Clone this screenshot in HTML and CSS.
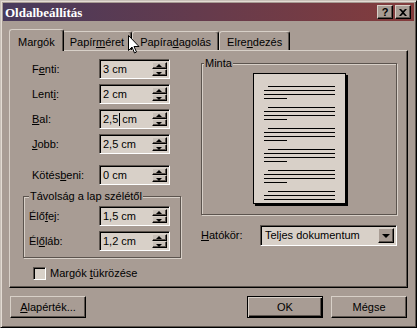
FILE: index.html
```html
<!DOCTYPE html>
<html lang="hu">
<head>
    <meta charset="UTF-8">
    <title>Oldalbeállítás</title>
    <link rel="stylesheet" href="styles.css">
</head>
<body>
<div class="window">
    <!-- Címsor -->
    <div class="titlebar">
        <span class="title">Oldalbeállítás</span>
        <span class="tbtn help">?</span>
        <span class="tbtn">
            <svg width="8" height="7" viewBox="0 0 8 7"><path d="M0 0h2l2 2 2-2h2L5 3.5 8 7H6L4 5 2 7H0l3-3.5z" fill="#000"/></svg>
        </span>
    </div>

    <div class="content">
        <!-- Fülek -->
        <div class="tabs">
            <div class="tab active">Mar<u>g</u>ók</div>
            <div class="tab">Papír<u>m</u>éret</div>
            <div class="tab">Papíra<u>d</u>agolás</div>
            <div class="tab">Elre<u>n</u>dezés</div>
        </div>

        <div class="panel">
            <!-- Margók -->
            <div class="left">
                <div class="field">
                    <label>F<u>e</u>nti:</label>
                    <div class="spin"><span class="val">3 cm</span><span class="arrows"><i class="up"></i><i class="down"></i></span></div>
                </div>
                <div class="field">
                    <label>Lent<u>i</u>:</label>
                    <div class="spin"><span class="val">2 cm</span><span class="arrows"><i class="up"></i><i class="down"></i></span></div>
                </div>
                <div class="field">
                    <label><u>B</u>al:</label>
                    <div class="spin"><span class="val">2,5<span class="caret"></span>cm</span><span class="arrows"><i class="up"></i><i class="down"></i></span></div>
                </div>
                <div class="field">
                    <label><u>J</u>obb:</label>
                    <div class="spin"><span class="val">2,5 cm</span><span class="arrows"><i class="up"></i><i class="down"></i></span></div>
                </div>
                <div class="field gap">
                    <label>Kötés<u>b</u>eni:</label>
                    <div class="spin"><span class="val">0 cm</span><span class="arrows"><i class="up"></i><i class="down"></i></span></div>
                </div>

                <fieldset class="group">
                    <legend>Távolság a lap szélétől</legend>
                    <div class="field">
                        <label>Élő<u>f</u>ej:</label>
                        <div class="spin"><span class="val">1,5 cm</span><span class="arrows"><i class="up"></i><i class="down"></i></span></div>
                    </div>
                    <div class="field">
                        <label>Él<u>ő</u>láb:</label>
                        <div class="spin"><span class="val">1,2 cm</span><span class="arrows"><i class="up"></i><i class="down"></i></span></div>
                    </div>
                </fieldset>

                <div class="check">
                    <span class="box"></span>
                    <span>Margók <u>t</u>ükrözése</span>
                </div>
            </div>

            <!-- Minta és hatókör -->
            <div class="right">
                <fieldset class="sample">
                    <legend>Minta</legend>
                    <div class="page">
                        <div class="para"><div class="ln first"></div><div class="ln"></div><div class="ln"></div><div class="ln short"></div></div>
                        <div class="para"><div class="ln first"></div><div class="ln"></div><div class="ln"></div><div class="ln short"></div></div>
                        <div class="para"><div class="ln first"></div><div class="ln"></div><div class="ln"></div><div class="ln short"></div></div>
                        <div class="para"><div class="ln first"></div><div class="ln"></div><div class="ln"></div><div class="ln short"></div></div>
                        <div class="para"><div class="ln first"></div><div class="ln"></div><div class="ln"></div><div class="ln short"></div></div>
                        <div class="para"><div class="ln first"></div><div class="ln"></div><div class="ln"></div></div>
                    </div>
                </fieldset>

                <div class="scope">
                    <label><u>H</u>atókör:</label>
                    <div class="select">
                        <span class="val">Teljes dokumentum</span>
                        <span class="drop"><i></i></span>
                    </div>
                </div>
            </div>
        </div>

        <!-- Gombok -->
        <div class="buttons">
            <button class="btn"><u>A</u>lapérték...</button>
            <span class="spacer"></span>
            <button class="btn default">OK</button>
            <button class="btn">Mégse</button>
        </div>
    </div>

    <!-- Egérmutató -->
    <svg class="cursor" width="12" height="20" viewBox="0 0 12 20">
        <path d="M0.5 0.5v15l3.5-3.5 2.5 6 2-1-2.5-5.5h5z" fill="#fff" stroke="#000" stroke-width="1"/>
    </svg>
</div>
</body>
</html>
```

FILE: styles.css
```css
body {
    margin: 0;
    font-family: "Liberation Sans", Arial, sans-serif;
    font-size: 11px;
    line-height: 13px;
    color: #000;
    background: #a89c94;
}
u {
    text-decoration: underline;
    text-underline-offset: 1px;
}

/* Ablakkeret */
.window {
    position: relative;
    width: 417px;
    height: 328px;
    box-sizing: border-box;
    padding: 2px;
    background: #a89c94;
    border: 1px solid;
    border-color: #c8c0b8 #000 #000 #c8c0b8;
    box-shadow: inset 1px 1px #e4dcd4, inset -1px -1px #5c544e;
}

.titlebar {
    display: flex;
    align-items: center;
    height: 18px;
    padding: 0 3px 0 2px;
    background: linear-gradient(to right, #483a5c, #843c3c);
}
.title {
    flex: 1;
    color: #fff;
    font-family: "Liberation Serif", serif;
    font-weight: bold;
    font-size: 13px;
}
.tbtn {
    display: flex;
    align-items: center;
    justify-content: center;
    width: 16px;
    height: 14px;
    box-sizing: border-box;
    margin-left: 2px;
    background: #a89c94;
    border: 1px solid;
    border-color: #d8d0c8 #000 #000 #d8d0c8;
    box-shadow: inset -1px -1px #5c544e;
    font-weight: bold;
    font-size: 11px;
}

.content {
    padding: 8px 6px 0;
}

/* Fülek */
.tabs {
    display: flex;
    align-items: flex-end;
    height: 21px;
    padding-left: 2px;
}
.tab {
    height: 19px;
    box-sizing: border-box;
    padding: 4px 7px 0;
    border: 1px solid;
    border-color: #d8d0c8 #000 transparent #d8d0c8;
    border-bottom: none;
    border-radius: 3px 3px 0 0;
    box-shadow: inset -1px 0 #5c544e;
    white-space: nowrap;
}
.tab.active {
    position: relative;
    z-index: 1;
    height: 22px;
    margin: 0 -2px -1px;
    padding: 6px 8px 0;
    background: #a89c94;
}

.panel {
    display: flex;
    height: 238px;
    box-sizing: border-box;
    border: 1px solid;
    border-color: #d8d0c8 #000 #000 #d8d0c8;
    box-shadow: inset -1px -1px #5c544e;
}

.left {
    width: 171px;
    box-sizing: border-box;
    padding: 8px 0 0 13px;
}
.field {
    display: flex;
    align-items: center;
    height: 20px;
    margin-bottom: 5px;
    padding-left: 9px;
}
.field label {
    width: 67px;
}
.field.gap {
    margin-top: 11px;
}

/* Léptető mező */
.spin {
    display: flex;
    width: 71px;
    height: 20px;
    box-sizing: border-box;
    border: 1px solid;
    border-color: #5c544e #fff #fff #5c544e;
    box-shadow: inset 1px 1px #000, inset -1px -1px #d8d0c8;
    background: #d8d0c8;
    padding: 2px 2px 2px 3px;
}
.spin .val {
    flex: 1;
    display: flex;
    align-items: center;
}
.caret {
    display: inline-block;
    width: 1px;
    height: 13px;
    margin: 0 2px 0 1px;
    background: #000;
}
.arrows {
    display: flex;
    flex-direction: column;
    width: 15px;
}
.arrows i {
    position: relative;
    flex: 1;
    box-sizing: border-box;
    border: 1px solid;
    border-color: #d8d0c8 #000 #000 #d8d0c8;
    box-shadow: inset -1px -1px #5c544e;
    background: #c8c0b8;
}
.arrows i::after {
    content: "";
    position: absolute;
    left: 3px;
    top: 1px;
    border-left: 3px solid transparent;
    border-right: 3px solid transparent;
}
.arrows .up::after {
    border-bottom: 3px solid #000;
}
.arrows .down::after {
    top: 2px;
    border-top: 3px solid #000;
}

/* Csoportkeretek */
fieldset {
    margin: 0;
    border: 1px solid #5c544e;
    box-shadow: inset 1px 1px #d8d0c8, 1px 1px #d8d0c8;
}
legend {
    padding: 0 1px;
    background: #a89c94;
}
.group {
    width: 158px;
    box-sizing: border-box;
    padding: 3px 5px 1px;
}
.group .field {
    padding-left: 0;
}
.group .field label {
    width: 70px;
}

.check {
    display: flex;
    align-items: center;
    gap: 4px;
    margin-top: 9px;
    padding-left: 10px;
}
.check .box {
    width: 13px;
    height: 13px;
    box-sizing: border-box;
    border: 1px solid;
    border-color: #5c544e #fff #fff #5c544e;
    box-shadow: inset 1px 1px #000, inset -1px -1px #d8d0c8;
    background: #d8d0c8;
}

.right {
    width: 196px;
    margin-left: 20px;
    padding-top: 6px;
}
.sample {
    padding: 3px 2px 10px;
}
.page {
    width: 93px;
    height: 131px;
    box-sizing: border-box;
    margin: 0 auto;
    padding: 12px 10px 0;
    border: 1px solid #000;
    background: #d8d0c8;
    box-shadow: 2px 2px 0 #000;
}
.para {
    margin-bottom: 8px;
}
.ln {
    height: 1px;
    margin-bottom: 3px;
    background: #000;
}
.ln.first {
    margin-left: 4px;
}
.ln.short {
    width: 23px;
}

.scope {
    display: flex;
    align-items: center;
    margin-top: 10px;
}
.scope label {
    width: 59px;
}
.select {
    display: flex;
    width: 137px;
    height: 21px;
    box-sizing: border-box;
    border: 1px solid;
    border-color: #5c544e #fff #fff #5c544e;
    box-shadow: inset 1px 1px #000, inset -1px -1px #d8d0c8;
    background: #d8d0c8;
    padding: 2px 2px 2px 4px;
}
.select .val {
    flex: 1;
    display: flex;
    align-items: center;
}
.drop {
    display: flex;
    align-items: center;
    justify-content: center;
    width: 16px;
    box-sizing: border-box;
    border: 1px solid;
    border-color: #d8d0c8 #000 #000 #d8d0c8;
    box-shadow: inset -1px -1px #5c544e;
    background: #a89c94;
}
.drop i {
    border-left: 4px solid transparent;
    border-right: 4px solid transparent;
    border-top: 4px solid #000;
}

/* Gombok */
.buttons {
    display: flex;
    gap: 8px;
    margin-top: 8px;
    padding: 0 1px;
}
.spacer {
    flex: 1;
}
.btn {
    width: 76px;
    height: 22px;
    padding: 0;
    font: inherit;
    color: #000;
    background: #a89c94;
    border: 1px solid;
    border-color: #d8d0c8 #000 #000 #d8d0c8;
    box-shadow: inset -1px -1px #5c544e;
    border-radius: 0;
}
.btn.default {
    border-color: #000;
    box-shadow: inset 1px 1px #d8d0c8, inset -1px -1px #000, inset -2px -2px #5c544e;
}

.cursor {
    position: absolute;
    left: 127px;
    top: 34px;
    z-index: 5;
}
```
